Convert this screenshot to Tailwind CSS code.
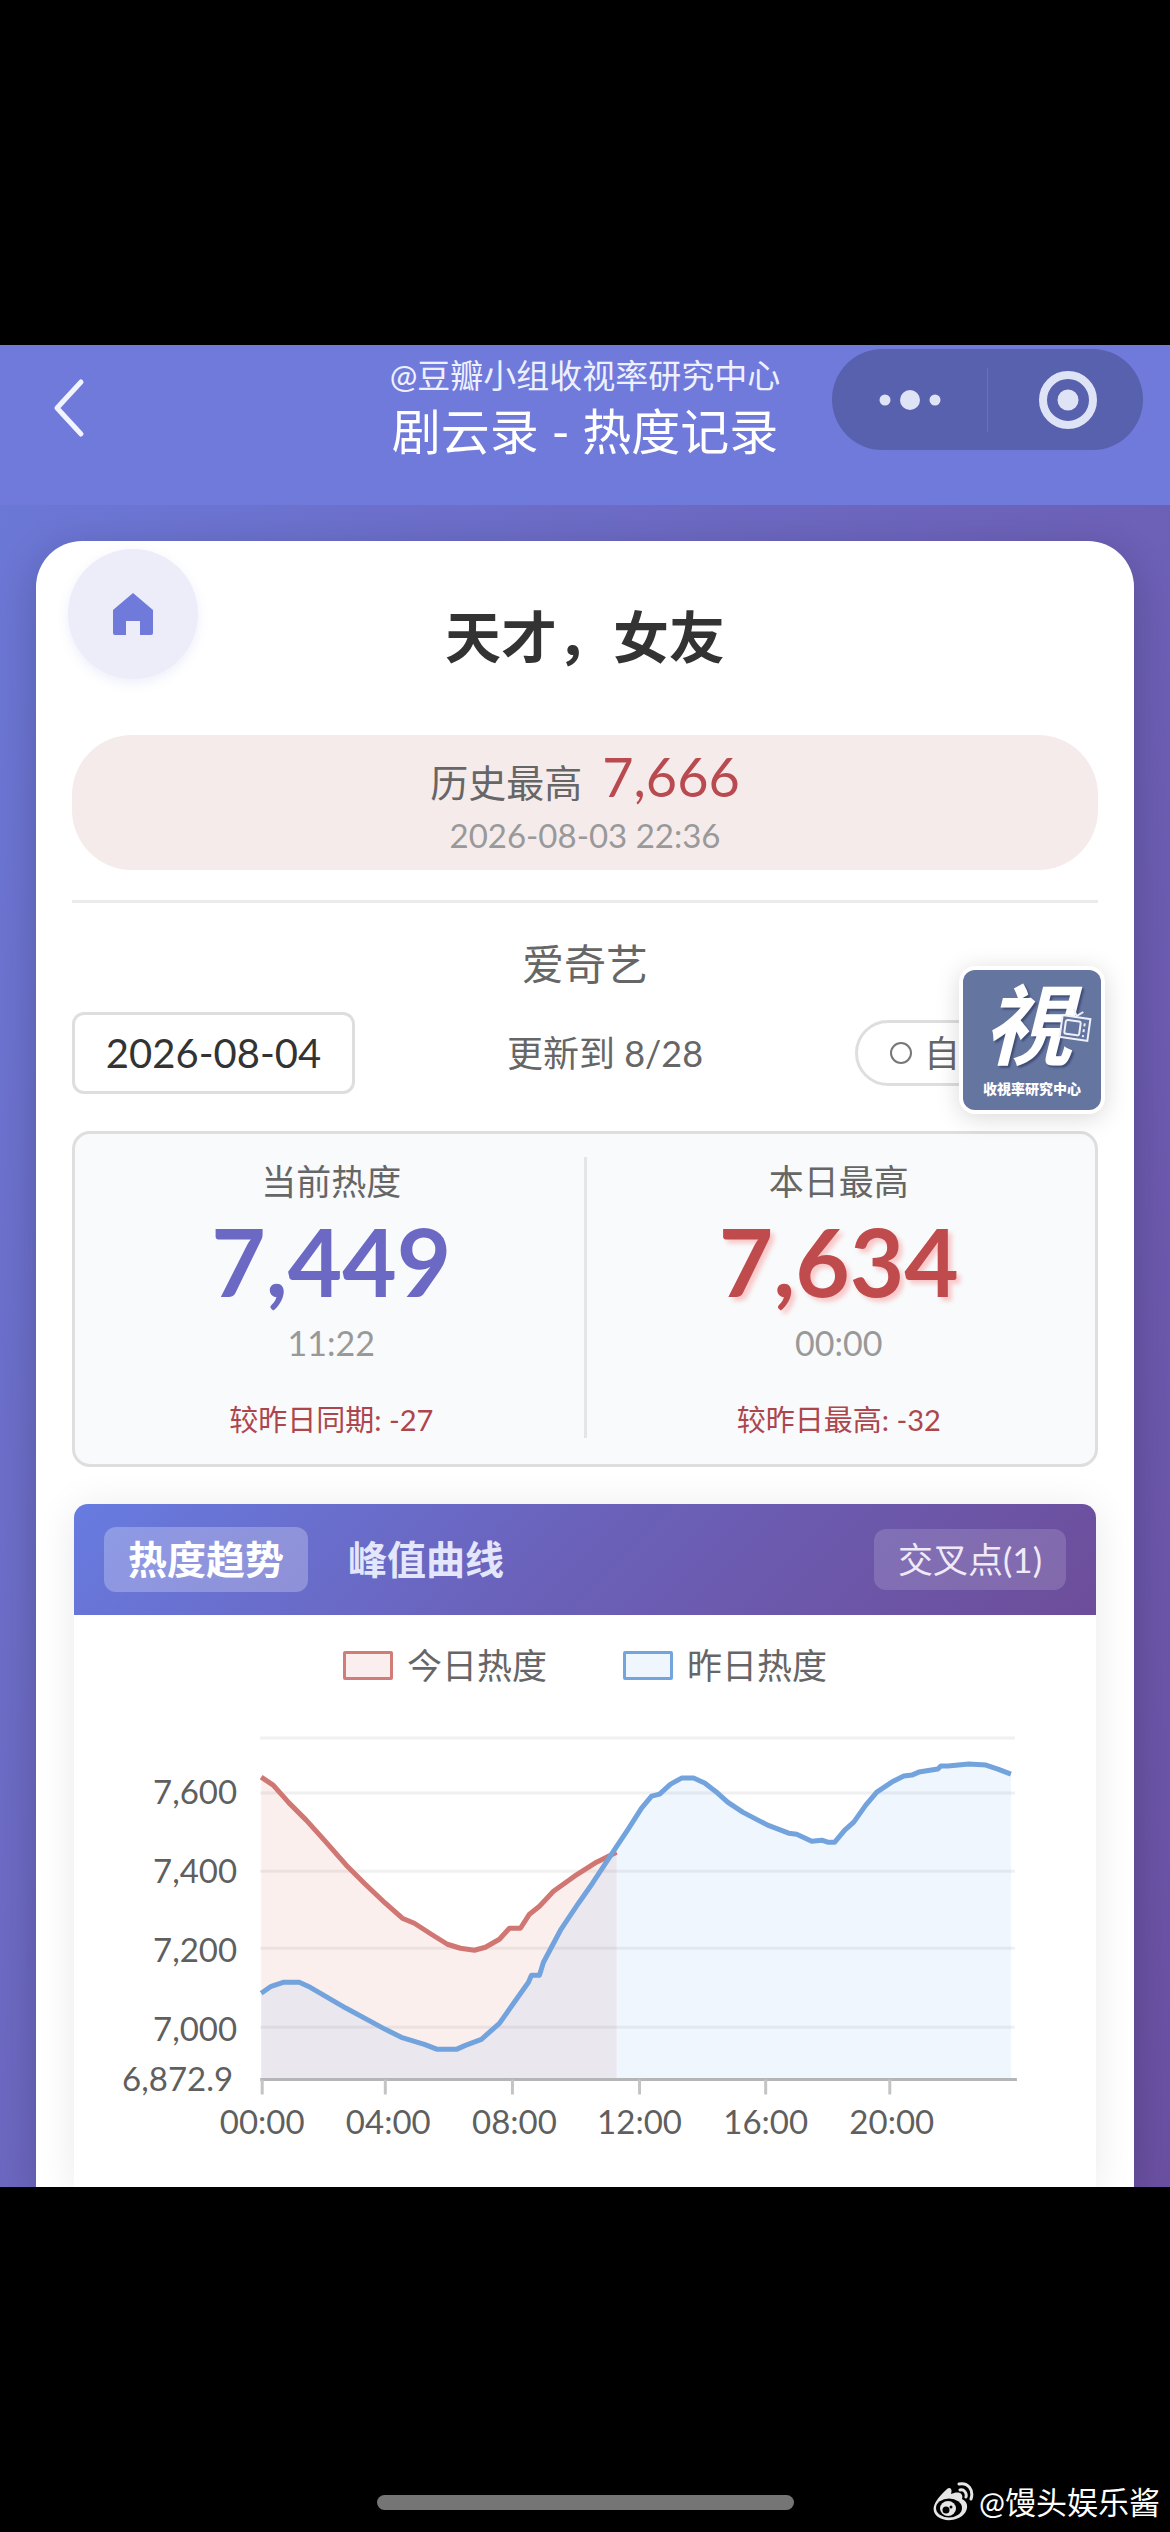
<!DOCTYPE html>
<html lang="zh-CN">
<head>
    <meta charset="UTF-8">
    <meta name="viewport" content="width=device-width, initial-scale=1">
    <title>剧云录 - 热度记录</title>
    <script src="https://cdn.jsdelivr.net/npm/@tailwindcss/browser@4"></script>
</head>
<body class="min-h-screen flex flex-col bg-black font-[Lato,'Noto_Sans_CJK_SC',sans-serif] text-[#666]">

<div class="mt-[345px] bg-linear-115 from-[#6b79d8] to-[#6b50a2]">
    <!-- Nav bar -->
    <header class="h-40 grid grid-cols-[1fr_auto_1fr] items-start bg-[#6f7adb] text-white">
        <button type="button" aria-label="返回" class="h-[126px] pl-[50px] flex items-center">
            <svg class="w-9 h-16" viewBox="0 0 36 64" fill="none" stroke="#f1f3ff" stroke-width="5" stroke-linecap="round" stroke-linejoin="round">
                <path d="M31 6 L7 32 L31 58"/>
            </svg>
        </button>
        <div class="pt-2 text-center">
            <p class="text-[33px] leading-[44px] text-[#eef0ff]">@豆瓣小组收视率研究中心</p>
            <h1 class="text-[49px] leading-[68px]">剧云录 - 热度记录</h1>
        </div>
        <div class="justify-self-end mt-1 mr-[27px] w-[311px] h-[101px] rounded-full bg-[#5761ad] flex items-center">
            <button type="button" aria-label="更多" class="flex-1 h-16 flex items-center justify-center">
                <svg class="w-16 h-8" viewBox="0 0 64 32" fill="#dfe3f6">
                    <circle cx="7" cy="16" r="5.5"/>
                    <circle cx="32" cy="16" r="10"/>
                    <circle cx="57" cy="16" r="5.5"/>
                </svg>
            </button>
            <span class="w-px h-16 bg-white/10"></span>
            <button type="button" aria-label="关闭" class="flex-1 h-16 flex items-center justify-center">
                <svg class="w-16 h-16" viewBox="0 0 64 64">
                    <circle cx="34" cy="32" r="25" fill="none" stroke="#dfe3f6" stroke-width="8"/>
                    <circle cx="34" cy="32" r="10.5" fill="#dfe3f6"/>
                </svg>
            </button>
        </div>
    </header>

    <!-- Main card -->
    <main class="relative mx-9 mt-9 px-9 pt-2 bg-white rounded-t-[46px] shadow-[0_10px_40px_rgba(0,0,0,0.2)]">
        <div class="grid grid-cols-[1fr_auto_1fr]">
            <a href="#" aria-label="首页" class="-ml-1 w-[130px] h-[130px] rounded-full bg-[#ecedf9] shadow-[0_4px_12px_rgba(110,122,219,0.12)] flex items-center justify-center">
                <svg class="w-11 h-11" viewBox="0 0 44 44" fill="#6f7adb">
                    <path d="M22 1 L42 18 V41 Q42 43 40 43 H29 V29 H15 V43 H4 Q2 43 2 41 V18 Z"/>
                </svg>
            </a>
            <h2 class="self-end text-[56px] leading-[84px] font-bold text-[#333]">天才，女友</h2>
        </div>

        <div class="mt-14 pt-2 pb-4 rounded-[60px] bg-[#f5ebeb] text-center">
            <p class="flex justify-center items-baseline gap-5 text-[38px] leading-[68px]">历史最高 <span class="text-[54px] text-[#b94a50]">7,666</span></p>
            <p class="text-[33px] leading-[38px] text-[#999]">2026-08-03 22:36</p>
        </div>

        <div class="mt-[30px] pt-[29px] border-t-3 border-[#ebebeb]">
            <h3 class="text-center text-[42px] leading-[64px]">爱奇艺</h3>
            <div class="mt-4 flex items-center justify-between text-[36px]">
                <input type="text" aria-label="日期" value="2026-08-04" class="w-[283px] h-[82px] border-3 border-[#dedede] rounded-xl bg-white text-center text-[40px] text-[#333]">
                <p>更新到 8/28</p>
                <label class="w-[243px] h-[66px] pl-8 border-3 border-[#dedede] rounded-full flex items-center gap-3">
                    <input type="radio" class="appearance-none w-[22px] h-[22px] border-2 border-[#777] rounded-full">自
                </label>
            </div>
        </div>

        <!-- Floating badge -->
        <div class="absolute top-[425px] right-[29px] w-[146px] h-[148px] p-1 rounded-2xl bg-white shadow-[0_4px_24px_rgba(0,0,0,0.15)]">
            <div class="relative h-full rounded-xl bg-[#64759f] text-white text-center font-[Lato,'Noto_Sans_CJK_TC',sans-serif]">
                <span class="block pt-1 pr-2 text-[88px] leading-[100px] font-bold italic text-shadow-[2px_2px_2px_rgba(40,50,90,0.6)]">視</span>
                <span class="block text-[14px] leading-[30px] font-black">收視率研究中心</span>
                <svg class="absolute right-2 top-9 w-9 h-10" viewBox="0 0 36 40" fill="none" stroke="#eef1fa" stroke-width="2">
                    <g transform="rotate(8 18 22)">
                        <rect x="4" y="11" width="28" height="22" fill="#64759f"/>
                        <rect x="8" y="15" width="15" height="14" rx="2"/>
                        <path d="M14 3 L18 10 L24 5"/>
                        <path d="M27 16 V30" stroke-dasharray="3 3"/>
                    </g>
                </svg>
            </div>
        </div>

        <!-- Current / highest -->
        <section class="mt-[37px] h-[336px] pt-[23px] px-1 border-3 border-[#dedede] rounded-[18px] bg-[#f8fafb] flex text-center">
            <div class="flex-1">
                <p class="text-[35px] leading-[48px]">当前热度</p>
                <p class="text-[94px] leading-[112px] font-bold text-[#6b69c4]">7,449</p>
                <p class="text-[34px] leading-[52px] text-[#999]">11:22</p>
                <p class="mt-[27px] text-[29px] leading-[48px] text-[#ad464c]">较昨日同期: -27</p>
            </div>
            <div class="w-[3px] h-[281px] bg-[#e4e5e6]"></div>
            <div class="flex-1">
                <p class="text-[35px] leading-[48px]">本日最高</p>
                <p class="text-[94px] leading-[112px] font-bold text-[#bf4b4d] text-shadow-[4px_4px_4px_rgba(255,90,90,0.3)]">7,634</p>
                <p class="text-[34px] leading-[52px] text-[#999]">00:00</p>
                <p class="mt-[27px] text-[29px] leading-[48px] text-[#ad464c]">较昨日最高: -32</p>
            </div>
        </section>

        <!-- Trend chart -->
        <section class="mt-[37px] mx-[2px] rounded-t-[14px] bg-white shadow-[0_4px_40px_rgba(0,0,0,0.09)]">
            <div class="h-[111px] px-[30px] flex items-center rounded-t-[14px] bg-linear-135 from-[#677be0] via-[#6a60b8] to-[#6d4d9a] text-white">
                <button type="button" class="h-[65px] px-6 rounded-xl bg-white/25 text-[39px] font-bold">热度趋势</button>
                <button type="button" class="h-[65px] ml-4 px-6 rounded-xl text-[39px] font-bold text-[#e4e7fb]">峰值曲线</button>
                <button type="button" class="h-[61px] ml-auto px-6 rounded-xl bg-white/15 text-[35px] text-[#f0eaf8]">交叉点(1)</button>
            </div>
            <div class="pt-[30px] flex justify-center gap-[76px] text-[35px] leading-[40px]">
                <span class="flex items-center gap-3.5"><i class="w-[50px] h-[29px] border-3 border-[#d07c79] bg-[#faefee] rounded-xs"></i>今日热度</span>
                <span class="flex items-center gap-3.5"><i class="w-[50px] h-[29px] border-3 border-[#74a4dc] bg-[#eff6fe] rounded-xs"></i>昨日热度</span>
            </div>
            <svg class="block w-full" viewBox="74 1685 1021 502" fill="none">
                <g stroke="#f0f0f0" stroke-width="3">
                    <path d="M260 1738 H1014"/>
                    <path d="M260 1793 H1014"/>
                    <path d="M260 1871 H1014"/>
                    <path d="M260 1948 H1014"/>
                    <path d="M260 2027 H1014"/>
                </g>
                <!-- today -->
                <path fill="#d9605a" fill-opacity="0.1" d="M261 1777 L273 1785 L289 1803 L306 1820 L324 1840 L346 1865 L364 1883 L385 1903 L402 1918 L414 1923 L431 1934 L447 1944 L460 1948 L474 1950 L485 1947 L499 1939 L509 1928 L520 1928 L529 1914 L539 1906 L553 1891 L574 1876 L596 1862 L616 1852 V2079 H261 Z"/>
                <!-- yesterday -->
                <path fill="#4a9bf0" fill-opacity="0.09" d="M261 1993 L271 1986 L283 1982 L299 1982 L310 1987 L346 2008 L385 2029 L401 2037 L424 2044 L437 2049 L456 2049 L465 2045 L481 2039 L499 2023 L528 1982 L531 1975 L539 1975 L543 1962 L560 1930 L578 1903 L592 1883 L615 1848 L627 1830 L641 1808 L651 1796 L659 1794 L670 1784 L681 1778 L693 1778 L704 1783 L717 1793 L727 1802 L742 1812 L767 1825 L788 1833 L796 1834 L811 1841 L834 1842 L853 1822 L865 1805 L876 1792 L891 1782 L903 1776 L911 1775 L918 1772 L937 1769 L940 1766 L947 1766 L968 1764 L985 1765 L997 1769 L1010 1774 V2079 H261 Z"/>
                <g stroke-width="5" stroke-linejoin="round">
                    <path stroke="#d07773" d="M261 1777 L273 1785 L289 1803 L306 1820 L324 1840 L346 1865 L364 1883 L385 1903 L402 1918 L414 1923 L431 1934 L447 1944 L460 1948 L474 1950 L485 1947 L499 1939 L509 1928 L520 1928 L529 1914 L539 1906 L553 1891 L574 1876 L596 1862 L616 1852"/>
                    <path stroke="#72a3dd" d="M261 1993 L271 1986 L283 1982 L299 1982 L310 1987 L346 2008 L385 2029 L401 2037 L424 2044 L437 2049 L456 2049 L465 2045 L481 2039 L499 2023 L528 1982 L531 1975 L539 1975 L543 1962 L560 1930 L578 1903 L592 1883 L615 1848 L627 1830 L641 1808 L651 1796 L659 1794 L670 1784 L681 1778 L693 1778 L704 1783 L717 1793 L727 1802 L742 1812 L767 1825 L788 1833 L796 1834 L811 1841 L821 1840 L827 1842 L834 1842 L844 1830 L853 1822 L865 1805 L876 1792 L891 1782 L903 1776 L911 1775 L918 1772 L937 1769 L940 1766 L947 1766 L968 1764 L985 1765 L997 1769 L1010 1774"/>
                </g>
                <path stroke="#b4b5b7" stroke-width="3" d="M260 2079 H1016"/>
                <path stroke="#c4c4c4" stroke-width="3" d="M262 2079 V2094 M385 2079 V2094 M512 2079 V2094 M639 2079 V2094 M765 2079 V2094 M889 2079 V2094"/>
                <g fill="#5f5f5f" font-size="33" text-anchor="end">
                    <text x="237" y="1804">7,600</text>
                    <text x="237" y="1883">7,400</text>
                    <text x="237" y="1962">7,200</text>
                    <text x="237" y="2041">7,000</text>
                    <text x="233" y="2091">6,872.9</text>
                </g>
                <g fill="#5f5f5f" font-size="33" text-anchor="middle">
                    <text x="262" y="2134">00:00</text>
                    <text x="388" y="2134">04:00</text>
                    <text x="514" y="2134">08:00</text>
                    <text x="639" y="2134">12:00</text>
                    <text x="765" y="2134">16:00</text>
                    <text x="891" y="2134">20:00</text>
                </g>
            </svg>
        </section>
    </main>
</div>

<!-- Home indicator and watermark -->
<footer class="mt-auto pb-2.5 px-2.5 grid grid-cols-[1fr_auto_1fr] items-center text-white">
    <span></span>
    <span class="w-[417px] h-[15px] rounded-full bg-[#757575]"></span>
    <p class="justify-self-end flex items-center gap-1 text-[31px] leading-8">
        <svg class="w-11 h-10" viewBox="0 0 44 40">
            <path fill="#e6e6e6" d="M15 8 C18 4 22 6 20 12 C26 9 33 10 31 17 C38 20 37 28 33 32 C27 39 14 40 7 35 C-1 29 2 20 15 8 Z"/>
            <ellipse cx="18" cy="26" rx="13" ry="9.5" fill="#000"/>
            <ellipse cx="17" cy="26.5" rx="8" ry="7.5" fill="#e6e6e6"/>
            <circle cx="15" cy="28" r="3.5" fill="#000"/>
            <circle cx="20" cy="25" r="1.5" fill="#000"/>
            <path fill="none" stroke="#e6e6e6" stroke-width="3" stroke-linecap="round" d="M28 2 C37 0 43 8 40 17 M29 8 C33 7 36 11 35 15"/>
        </svg>
        @馒头娱乐酱
    </p>
</footer>

</body>
</html>
